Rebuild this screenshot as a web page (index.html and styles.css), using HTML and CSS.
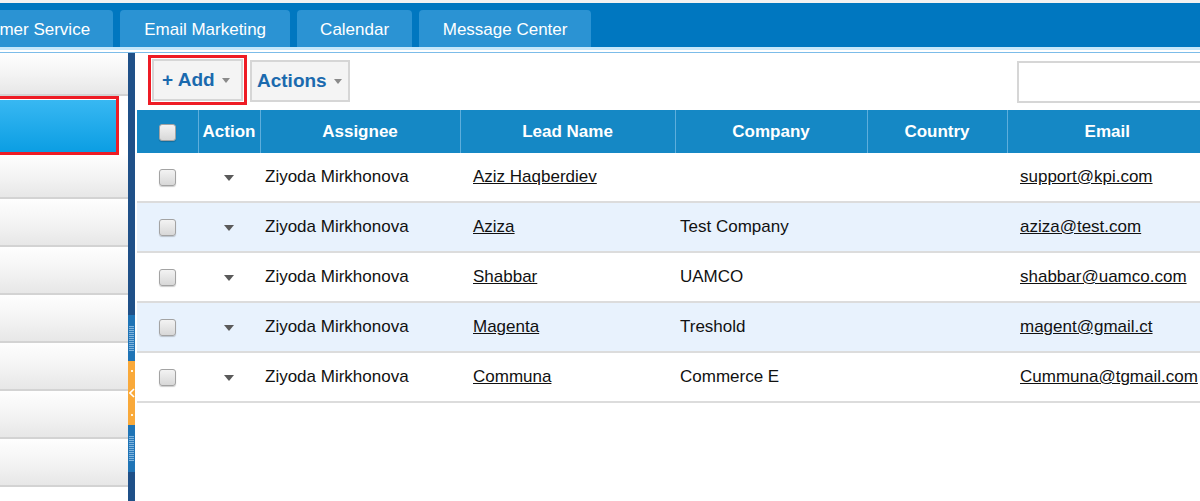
FILE: index.html
```html
<!DOCTYPE html>
<html>
<head>
<meta charset="utf-8">
<link rel="stylesheet" href="styles.css">
</head>
<body>
<div class="topstrip"></div>
<header class="topbar">
  <a class="tab tab-first">Customer Service</a>
  <a class="tab tab-email">Email Marketing</a>
  <a class="tab tab-cal">Calendar</a>
  <a class="tab tab-msg">Message Center</a>
</header>
<div class="rule"></div>
<div class="layout">
  <aside class="sidebar">
    <div class="side-item side-first"></div>
    <div class="side-active-wrap"><div class="side-active"></div></div>
    <div class="side-item side-short"></div>
    <div class="side-item"></div>
    <div class="side-item"></div>
    <div class="side-item"></div>
    <div class="side-item"></div>
    <div class="side-item"></div>
    <div class="side-item"></div>
  </aside>
  <div class="splitter">
    <div class="sp-dark sp-top"></div>
    <div class="sp-grip"><div class="ribs"></div></div>
    <div class="sp-toggle">
      <span class="dot"></span>
      <svg class="chev" width="6" height="10" viewBox="0 0 6 10"><path d="M5 1 L1 5 L5 9" fill="none" stroke="#fff" stroke-width="1.6"/></svg>
      <span class="dot"></span>
    </div>
    <div class="sp-grip sp-grip2"><div class="ribs"></div></div>
    <div class="sp-dark sp-bottom"></div>
  </div>
  <main class="main">
    <div class="toolbar">
      <div class="highlight"><button class="tbtn">+ Add <span class="tcaret"></span></button></div>
      <button class="tbtn tbtn-actions">Actions <span class="tcaret"></span></button>
      <input class="search" type="text">
    </div>
    <table class="grid">
      <colgroup>
        <col class="c-cb"><col class="c-act"><col class="c-asg"><col class="c-lead"><col class="c-comp"><col class="c-country"><col class="c-email">
      </colgroup>
      <thead>
        <tr>
          <th><span class="cb"></span></th>
          <th>Action</th>
          <th>Assignee</th>
          <th>Lead Name</th>
          <th>Company</th>
          <th>Country</th>
          <th>Email</th>
        </tr>
      </thead>
      <tbody>
        <tr>
          <td class="center"><span class="cb"></span></td>
          <td class="center"><span class="caret"></span></td>
          <td class="pl5">Ziyoda Mirkhonova</td>
          <td class="pl13"><a>Aziz Haqberdiev</a></td>
          <td class="pl5"></td>
          <td></td>
          <td class="pl13"><a>support@kpi.com</a></td>
        </tr>
        <tr class="alt">
          <td class="center"><span class="cb"></span></td>
          <td class="center"><span class="caret"></span></td>
          <td class="pl5">Ziyoda Mirkhonova</td>
          <td class="pl13"><a>Aziza</a></td>
          <td class="pl5">Test Company</td>
          <td></td>
          <td class="pl13"><a>aziza@test.com</a></td>
        </tr>
        <tr>
          <td class="center"><span class="cb"></span></td>
          <td class="center"><span class="caret"></span></td>
          <td class="pl5">Ziyoda Mirkhonova</td>
          <td class="pl13"><a>Shabbar</a></td>
          <td class="pl5">UAMCO</td>
          <td></td>
          <td class="pl13"><a>shabbar@uamco.com</a></td>
        </tr>
        <tr class="alt">
          <td class="center"><span class="cb"></span></td>
          <td class="center"><span class="caret"></span></td>
          <td class="pl5">Ziyoda Mirkhonova</td>
          <td class="pl13"><a>Magenta</a></td>
          <td class="pl5">Treshold</td>
          <td></td>
          <td class="pl13"><a>magent@gmail.ct</a></td>
        </tr>
        <tr>
          <td class="center"><span class="cb"></span></td>
          <td class="center"><span class="caret"></span></td>
          <td class="pl5">Ziyoda Mirkhonova</td>
          <td class="pl13"><a>Communa</a></td>
          <td class="pl5">Commerce E</td>
          <td></td>
          <td class="pl13"><a>Cummuna@tgmail.com</a></td>
        </tr>
      </tbody>
    </table>
  </main>
</div>
</body>
</html>
```

FILE: styles.css
```css
html, body {
  margin: 0;
  padding: 0;
  width: 1200px;
  height: 501px;
  overflow: hidden;
  background: #fff;
  font-family: "Liberation Sans", Arial, sans-serif;
}

.topstrip {
  height: 3px;
  background: #f2f2f2;
}

.topbar {
  height: 44px;
  box-sizing: border-box;
  padding-top: 7px;
  background: #0077c0;
  display: flex;
  gap: 7px;
  white-space: nowrap;
}

.tab {
  height: 37px;
  box-sizing: border-box;
  line-height: 35px;
  padding-top: 2px;
  text-align: center;
  background: #2b93d3;
  border-radius: 4px 4px 0 0;
  color: #fff;
  font-size: 17px;
  flex: none;
}

.tab-first {
  margin-left: -69px;
  padding: 2px 23px 0 24px;
}

.tab-email { width: 170px; }
.tab-cal { width: 115px; }
.tab-msg { width: 172px; }

.rule {
  height: 2px;
  border-top: 3px solid #c6e7fa;
  border-bottom: 1px solid #7cbce9;
  background: #fff;
}

.layout {
  display: flex;
  height: 448px;
}

.sidebar {
  width: 128px;
  flex: none;
  overflow: hidden;
  background: #fff;
}

.side-item {
  height: 46px;
  border-bottom: 2px solid #d3d3d3;
  background: linear-gradient(#fefefe, #f4f4f4 50%, #e7e7e7);
}

.side-first {
  height: 41px;
}

.side-short {
  height: 42px;
}

.side-active-wrap {
  width: 119px;
  height: 59px;
  box-sizing: border-box;
  border: 3px solid #ee1c25;
  border-left: none;
}

.side-active {
  height: 100%;
  background: linear-gradient(#38b8f2, #0b9ee3);
  border-top: 1px solid #fff;
  box-sizing: border-box;
}

.splitter {
  width: 7px;
  flex: none;
  display: flex;
  flex-direction: column;
  background: #1f5088;
}

.sp-top {
  height: 262px;
}

.sp-grip {
  height: 46px;
  background: #1f74b6;
  display: flex;
  align-items: center;
  justify-content: center;
}

.sp-grip2 {
  height: 47px;
}

.ribs {
  width: 5px;
  height: 25px;
  background: repeating-linear-gradient(#7fb4de 0 1px, #2a7bbb 1px 2px);
}

.sp-toggle {
  height: 64px;
  background: #f9a93a;
  display: flex;
  flex-direction: column;
  align-items: center;
  justify-content: space-between;
  padding: 9px 0;
  box-sizing: border-box;
}

.dot {
  width: 2px;
  height: 2px;
  background: #fff3dc;
}

.chev {
  display: block;
}

.sp-dark {
  flex: none;
}

.sp-bottom {
  flex: 1;
}

.main {
  width: 1100px;
  flex: none;
  padding-left: 2px;
}

.toolbar {
  height: 57px;
  box-sizing: border-box;
  display: flex;
  align-items: flex-start;
  padding: 2px 0 0 11px;
}

.highlight {
  border: 3px solid #ee1c25;
  padding: 1px;
  box-sizing: border-box;
  height: 50px;
  width: 99px;
}

.tbtn {
  height: 42px;
  box-sizing: border-box;
  border: 2px solid #d6d6d6;
  background: #f4f4f4;
  color: #1b6aae;
  font-family: "Liberation Sans", Arial, sans-serif;
  font-weight: bold;
  font-size: 19px;
  padding: 0 10px 0 8px;
  display: flex;
  align-items: center;
  gap: 7px;
  width: 91px;
  margin: 0;
}

.tbtn-actions {
  width: 100px;
  margin: 5px 0 0 3px;
  padding-left: 5px;
}

.tcaret {
  width: 0;
  height: 0;
  border-left: 4.5px solid transparent;
  border-right: 4.5px solid transparent;
  border-top: 5px solid #8a8a8a;
}

.search {
  margin: 6px 0 0 auto;
  width: 220px;
  height: 42px;
  box-sizing: border-box;
  border: 2px solid #d6d6d6;
  background: #fff;
}

.grid {
  border-collapse: collapse;
  table-layout: fixed;
  width: 1070px;
}

.c-cb { width: 61px; }
.c-act { width: 62px; }
.c-asg { width: 200px; }
.c-lead { width: 215px; }
.c-comp { width: 192px; }
.c-country { width: 140px; }
.c-email { width: 200px; }

.grid th {
  height: 43px;
  padding: 0;
  background: #1588c5;
  color: #fff;
  font-size: 17px;
  font-weight: bold;
  text-align: center;
  border-left: 1px solid #5eaedc;
  vertical-align: middle;
}

.grid th:first-child {
  border-left: none;
}

.grid td {
  height: 48px;
  padding: 0;
  font-size: 17px;
  color: #111;
  border-bottom: 2px solid #dcdcdc;
  vertical-align: middle;
  white-space: nowrap;
  overflow: hidden;
}

.grid tr.alt td {
  background: #e8f2fd;
}

.grid a {
  color: #111;
  text-decoration: underline;
}

.center {
  text-align: center;
}

.pl5 { padding-left: 5px !important; }
.pl13 { padding-left: 13px !important; }

.cb {
  display: inline-block;
  width: 15px;
  height: 15px;
  border: 1px solid #a3a3a3;
  border-radius: 3px;
  background: linear-gradient(#f3f3f3, #d8d8d8);
  box-shadow: 0 1px 1px rgba(0, 0, 0, 0.2);
  vertical-align: middle;
}

.caret {
  display: inline-block;
  width: 0;
  height: 0;
  border-left: 5px solid transparent;
  border-right: 5px solid transparent;
  border-top: 6px solid #5a5a5a;
  vertical-align: middle;
}
```
